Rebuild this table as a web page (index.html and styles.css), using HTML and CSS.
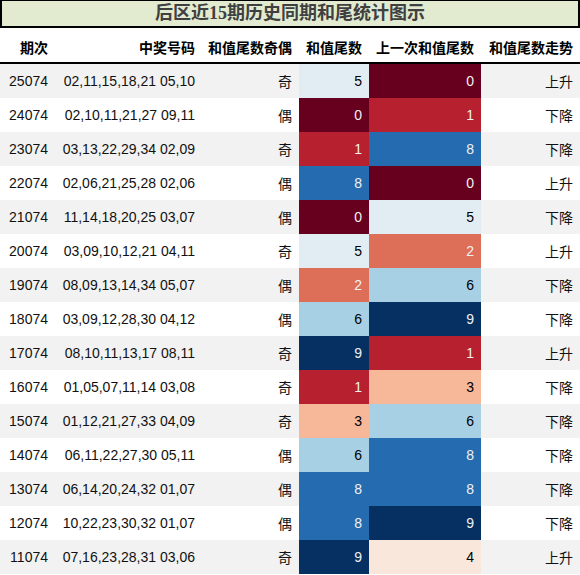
FILE: index.html
```html
<!DOCTYPE html>
<html lang="zh">
<head>
<meta charset="utf-8">
<title>后区近15期历史同期和尾统计图示</title>
<link rel="stylesheet" href="styles.css">
</head>
<body>
<div class="title">后区近15期历史同期和尾统计图示</div>
<div class="grid head">
  <div class="cell">期次</div>
  <div class="cell">中奖号码</div>
  <div class="cell">和值尾数奇偶</div>
  <div class="cell">和值尾数</div>
  <div class="cell">上一次和值尾数</div>
  <div class="cell">和值尾数走势</div>
</div>
<div class="grid row odd"><div class="cell">25074</div><div class="cell">02,11,15,18,21 05,10</div><div class="cell">奇</div><div class="cell c5">5</div><div class="cell c0">0</div><div class="cell">上升</div></div>
<div class="grid row"><div class="cell">24074</div><div class="cell">02,10,11,21,27 09,11</div><div class="cell">偶</div><div class="cell c0">0</div><div class="cell c1">1</div><div class="cell">下降</div></div>
<div class="grid row odd"><div class="cell">23074</div><div class="cell">03,13,22,29,34 02,09</div><div class="cell">奇</div><div class="cell c1">1</div><div class="cell c8">8</div><div class="cell">下降</div></div>
<div class="grid row"><div class="cell">22074</div><div class="cell">02,06,21,25,28 02,06</div><div class="cell">偶</div><div class="cell c8">8</div><div class="cell c0">0</div><div class="cell">上升</div></div>
<div class="grid row odd"><div class="cell">21074</div><div class="cell">11,14,18,20,25 03,07</div><div class="cell">偶</div><div class="cell c0">0</div><div class="cell c5">5</div><div class="cell">下降</div></div>
<div class="grid row"><div class="cell">20074</div><div class="cell">03,09,10,12,21 04,11</div><div class="cell">奇</div><div class="cell c5">5</div><div class="cell c2">2</div><div class="cell">上升</div></div>
<div class="grid row odd"><div class="cell">19074</div><div class="cell">08,09,13,14,34 05,07</div><div class="cell">偶</div><div class="cell c2">2</div><div class="cell c6">6</div><div class="cell">下降</div></div>
<div class="grid row"><div class="cell">18074</div><div class="cell">03,09,12,28,30 04,12</div><div class="cell">偶</div><div class="cell c6">6</div><div class="cell c9">9</div><div class="cell">下降</div></div>
<div class="grid row odd"><div class="cell">17074</div><div class="cell">08,10,11,13,17 08,11</div><div class="cell">奇</div><div class="cell c9">9</div><div class="cell c1">1</div><div class="cell">上升</div></div>
<div class="grid row"><div class="cell">16074</div><div class="cell">01,05,07,11,14 03,08</div><div class="cell">奇</div><div class="cell c1">1</div><div class="cell c3">3</div><div class="cell">下降</div></div>
<div class="grid row odd"><div class="cell">15074</div><div class="cell">01,12,21,27,33 04,09</div><div class="cell">奇</div><div class="cell c3">3</div><div class="cell c6">6</div><div class="cell">下降</div></div>
<div class="grid row"><div class="cell">14074</div><div class="cell">06,11,22,27,30 05,11</div><div class="cell">偶</div><div class="cell c6">6</div><div class="cell c8">8</div><div class="cell">下降</div></div>
<div class="grid row odd"><div class="cell">13074</div><div class="cell">06,14,20,24,32 01,07</div><div class="cell">偶</div><div class="cell c8">8</div><div class="cell c8">8</div><div class="cell">下降</div></div>
<div class="grid row"><div class="cell">12074</div><div class="cell">10,22,23,30,32 01,07</div><div class="cell">偶</div><div class="cell c8">8</div><div class="cell c9">9</div><div class="cell">下降</div></div>
<div class="grid row odd"><div class="cell">11074</div><div class="cell">07,16,23,28,31 03,06</div><div class="cell">奇</div><div class="cell c9">9</div><div class="cell c4">4</div><div class="cell">上升</div></div>
</body>
</html>
```
FILE: styles.css
```css
html, body {
  margin: 0;
  padding: 0;
  background: #ffffff;
}
body {
  width: 580px;
  font-family: "Liberation Sans", "Noto Sans CJK SC", sans-serif;
  font-size: 14px;
  color: #111;
}
.title {
  box-sizing: border-box;
  height: 28px;
  border-top: 1px solid #000;
  border-left: 2px solid #000;
  border-right: 2px solid #000;
  border-bottom: 2px solid #000;
  background: #e2ebd0;
  color: #404040;
  font-family: "Liberation Serif", "Noto Sans CJK SC", serif;
  font-weight: bold;
  font-size: 18px;
  line-height: 25px;
  text-align: center;
}
.grid {
  display: grid;
  grid-template-columns: 55px 147px 97px 70px 112px 99px;
  height: 34px;
}
.head {
  height: 34px;
  border-bottom: 2px solid #000;
  font-family: "Noto Sans CJK SC", sans-serif;
  font-weight: bold;
  color: #000;
}
.head .cell {
  padding-top: 3px;
}
.cell {
  box-sizing: border-box;
  display: flex;
  align-items: center;
  justify-content: flex-end;
  padding: 0 7px;
  white-space: nowrap;
}
.odd {
  background: #f2f2f2;
}
.c0 { background: #67001f; color: #f1f1f1; }
.c1 { background: #b6202f; color: #f1f1f1; }
.c2 { background: #dd6f59; color: #f1f1f1; }
.c3 { background: #f7b799; color: #000; }
.c4 { background: #fae7dc; color: #000; }
.c5 { background: #e2edf3; color: #000; }
.c6 { background: #a7d0e4; color: #000; }
.c8 { background: #256baf; color: #f1f1f1; }
.c9 { background: #053061; color: #f1f1f1; }
```
